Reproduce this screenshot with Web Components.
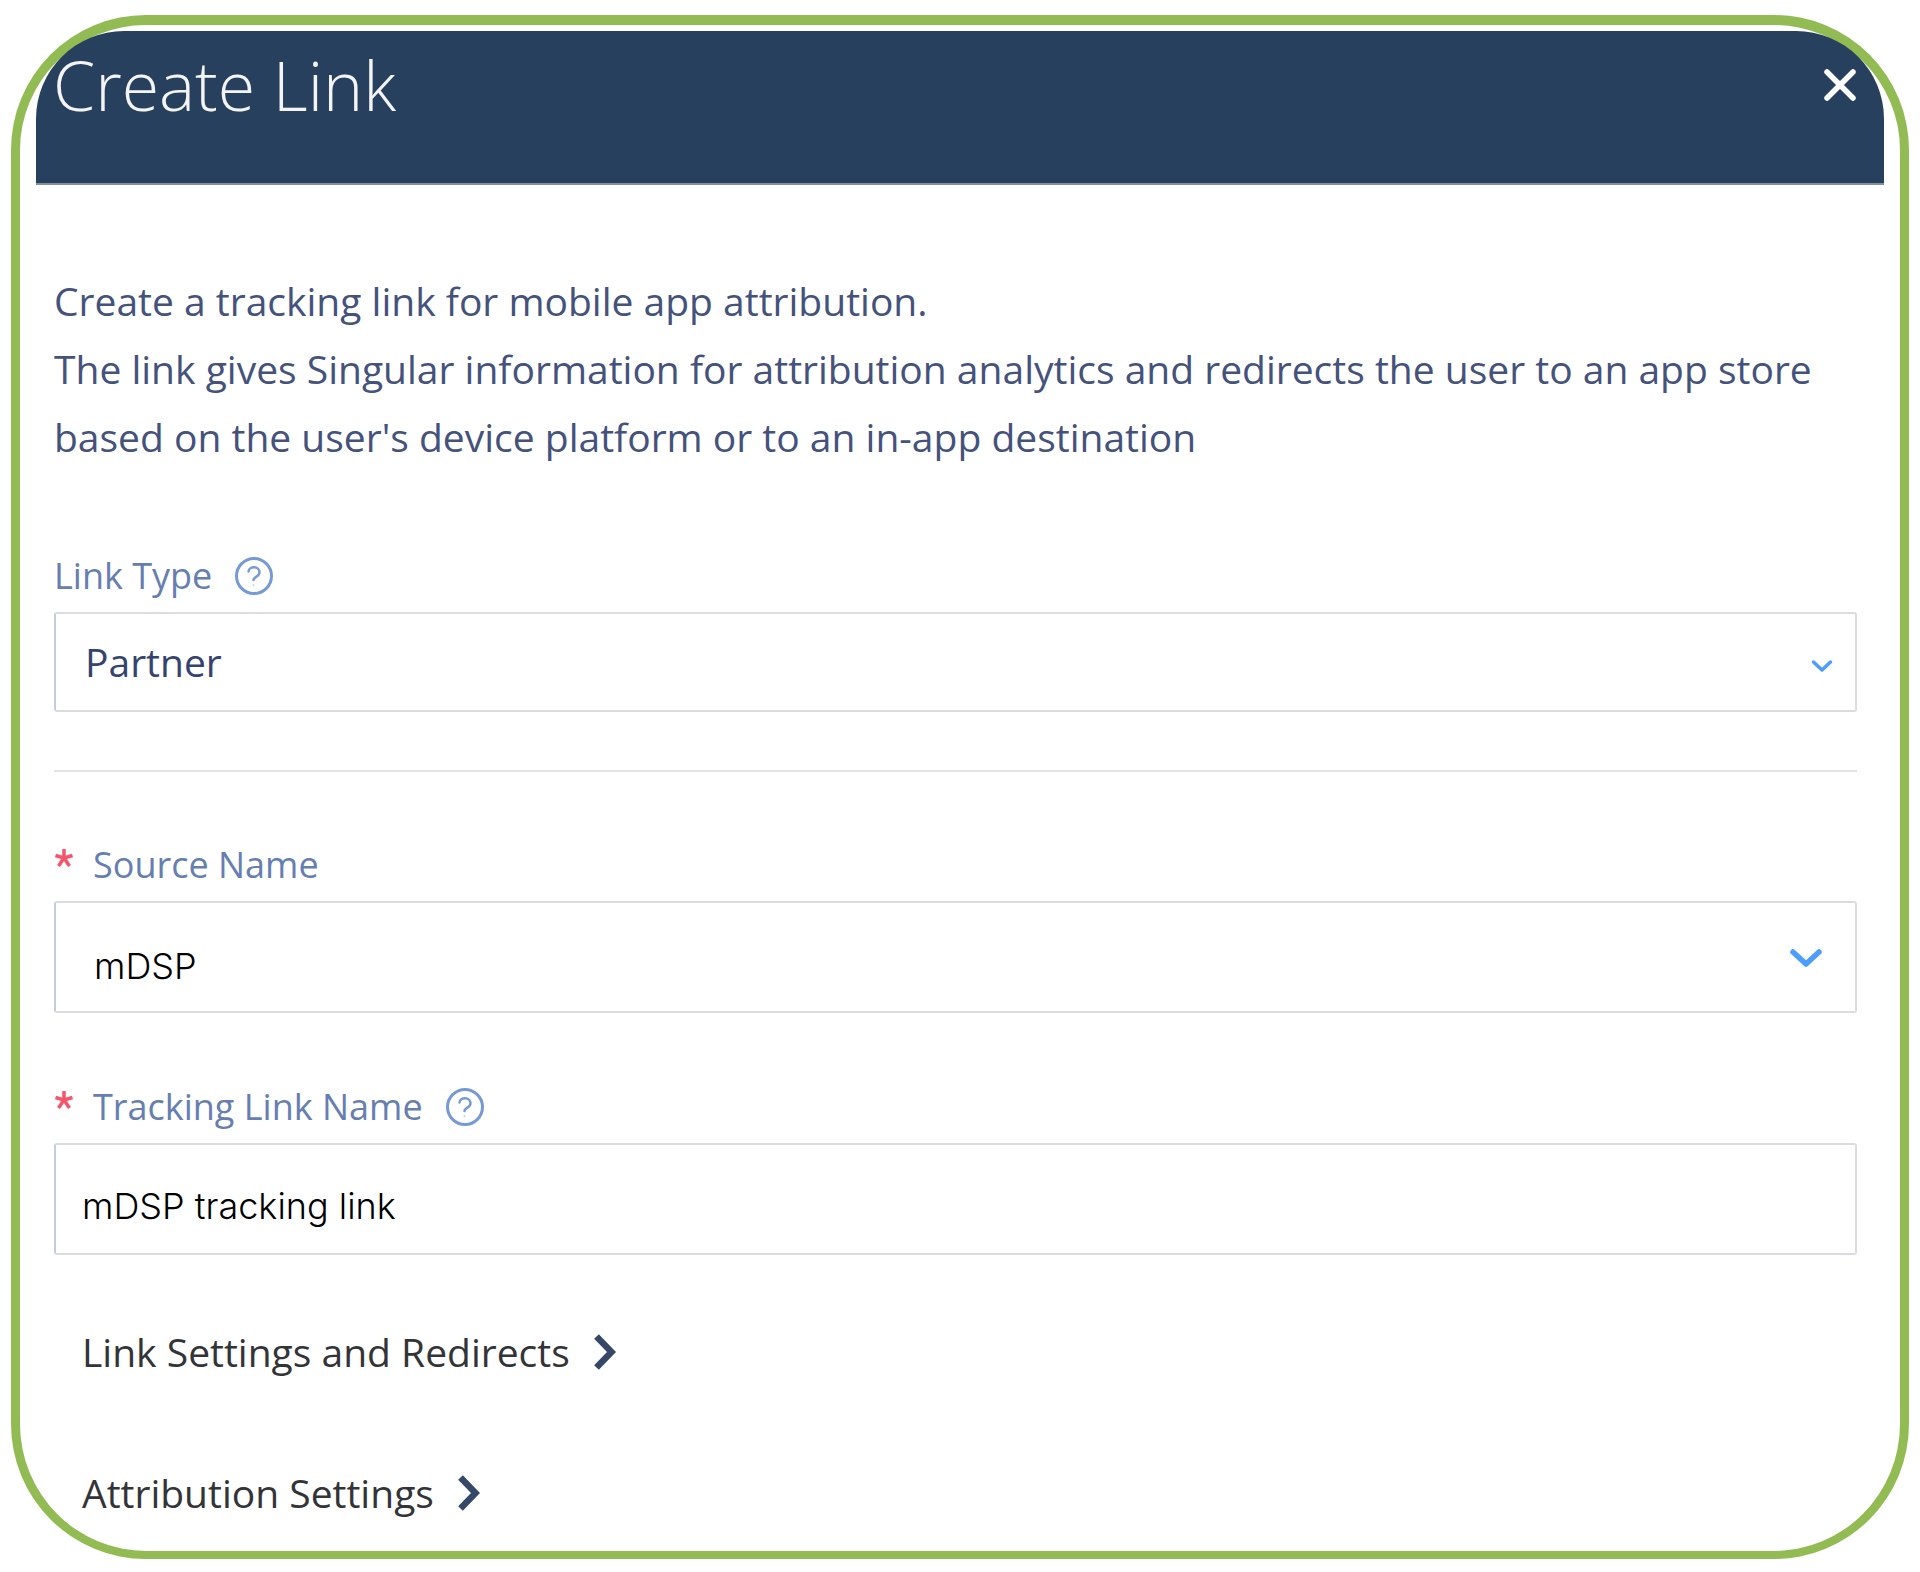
<!DOCTYPE html>
<html lang="en">
<head>
<meta charset="utf-8">
<title>Create Link</title>
<style>
  body { margin: 0; background: #fff; font-family: "Open Sans", "Noto Sans", sans-serif; }
</style>
</head>
<body>
<link-dialog heading="Create Link">
  <dialog-intro>
    <span>Create a tracking link for mobile app attribution.</span>
    <span>The link gives Singular information for attribution analytics and redirects the user to an app store based on the user's device platform or to an in-app destination</span>
  </dialog-intro>
  <select-field label="Link Type" value="Partner" help></select-field>
  <section-rule></section-rule>
  <select-field label="Source Name" value="mDSP" required large></select-field>
  <text-field label="Tracking Link Name" value="mDSP tracking link" required help></text-field>
  <expand-link>Link Settings and Redirects</expand-link>
  <expand-link>Attribution Settings</expand-link>
</link-dialog>

<script>
const define = (name, render) => customElements.define(name, class extends HTMLElement {
  connectedCallback() {
    if (!this.shadowRoot) this.attachShadow({ mode: "open" }).innerHTML = render(this);
  }
});

define("link-dialog", el => `
  <style>
    :host { display: block; margin: 15px 11px 13px; border: solid #92bb53; border-width: 10px 9px 8px; border-radius: 135px; padding: 6px 16px 30px; background: #fff; }
    header { display: flex; justify-content: space-between; align-items: flex-start; height: 154px; box-sizing: border-box; padding: 8px 24px 0 17px; background: #26405d; border-radius: 88px 88px 0 0; border-bottom: 2px solid #8290a3; }
    h1 { margin: 0; font-size: 68px; line-height: 92px; font-weight: 300; color: #f4f4f6; }
    button { display: block; margin-top: 26px; padding: 0; border: 0; background: none; color: #fff; }
    svg { display: block; }
    main { padding: 82px 27px 0 18px; }
  </style>
  <header>
    <h1>${el.getAttribute("heading")}</h1>
    <button type="button" aria-label="Close">
      <svg width="40" height="40" viewBox="0 0 40 40" fill="none" stroke="currentColor" stroke-width="5.500" stroke-linecap="round"><path d="M7 7 33 33M33 7 7 33"/></svg>
    </button>
  </header>
  <main><slot></slot></main>`);

define("dialog-intro", () => `
  <style>
    :host { display: block; margin-bottom: 80px; font-size: 39px; line-height: 68px; color: #44527c; }
    p { margin: 0; }
    ::slotted(span) { display: block; }
  </style>
  <p><slot></slot></p>`);

define("section-rule", () => `
  <style>
    :host { display: block; margin: 58px 0 68px; }
    hr { margin: 0; border: 0; height: 2px; background: #e0e3e8; }
  </style>
  <hr>`);

const fieldStyle = `
    :host { display: block; }
    .caption { display: flex; align-items: center; height: 50px; margin-bottom: 11px; color: #667eb1; }
    label { font-size: 36px; line-height: 50px; }
    .star { width: 18px; height: 18px; margin: 0 20px 14px 1px; }
    .help { display: block; width: 38px; height: 38px; margin-left: 23px; }
    .control { display: block; box-sizing: border-box; width: 100%; margin: 0; border: 2px solid #d9dce2; border-left-color: #c5cddd; border-radius: 3px; background: #fff; outline: 0; }
    .typed { height: 112px; color: #000; font-family: Inter, sans-serif; font-size: 36px; font-weight: 300; }`;

const caption = el => `
  <div class="caption">
    ${el.hasAttribute("required") ? `<svg class="star" viewBox="0 0 18 18" fill="none" stroke="#f4566a" stroke-width="3.500"><path d="M9 9V0M9 9 .5 6.500M9 9 17.500 6.500M9 9 3.500 17M9 9 14.500 17"/></svg>` : ""}
    <label for="control">${el.getAttribute("label")}</label>
    ${el.hasAttribute("help") ? `<svg class="help" viewBox="0 0 38 38" fill="none" stroke="#7799d4" stroke-width="3" stroke-linecap="round"><circle cx="19" cy="19" r="17.500"/><path d="M13.500 14.500C14 9 24.500 8.500 24.500 15.500 24.500 19.500 19 19.500 18.500 23" stroke-width="2.500"/><path d="M18.500 28v.2" stroke-width="2" opacity=".4"/></svg>` : ""}
  </div>`;

define("select-field", el => `
  <style>${fieldStyle}
    .box { display: grid; align-items: center; }
    .box > * { grid-area: 1 / 1; }
    select { appearance: none; }
    .plain { height: 100px; padding: 0 29px 2px; color: #34436f; font-family: inherit; font-size: 39px; }
    .typed { padding: 18px 38px 0; }
    .arrow { justify-self: end; pointer-events: none; }
    .small { width: 22px; height: 14px; margin: 8px 24px 0 0; }
    .big { width: 34px; height: 20px; margin: 2px 34px 0 0; }
  </style>
  ${caption(el)}
  <div class="box">
    <select id="control" class="control ${el.hasAttribute("large") ? "typed" : "plain"}"><option>${el.getAttribute("value")}</option></select>
    ${el.hasAttribute("large")
      ? `<svg class="arrow big" viewBox="0 0 34 20" fill="none" stroke="#4d9dfc" stroke-width="5.500" stroke-linecap="round" stroke-linejoin="round"><path d="M4 4 17 16 30 4"/></svg>`
      : `<svg class="arrow small" viewBox="0 0 22 14" fill="none" stroke="#4d9dfc" stroke-width="3.500" stroke-linecap="round" stroke-linejoin="round"><path d="M2.500 3 11 11 19.500 3"/></svg>`}
  </div>`);

define("text-field", el => `
  <style>${fieldStyle}
    :host { margin-top: 69px; }
    .typed { padding: 14px 26px 0; }
  </style>
  ${caption(el)}
  <input id="control" class="control typed" type="text" value="${el.getAttribute("value")}">`);

define("expand-link", () => `
  <style>
    :host { display: block; margin: 69px 0 85px 28px; }
    :host(:last-child) { margin-bottom: 0; margin-top: 85px; }
    button { display: flex; align-items: center; gap: 24px; padding: 0; border: 0; background: none; font: inherit; font-size: 39px; line-height: 56px; color: #333438; }
    svg { display: block; }
  </style>
  <button type="button" aria-expanded="false"><slot></slot>
    <svg width="22" height="36" viewBox="0 0 22 36" fill="none" stroke="#364867" stroke-width="6.500"><path d="M2.500 2.500 17.500 18 2.500 33.500"/></svg>
  </button>`);
</script>
</body>
</html>
